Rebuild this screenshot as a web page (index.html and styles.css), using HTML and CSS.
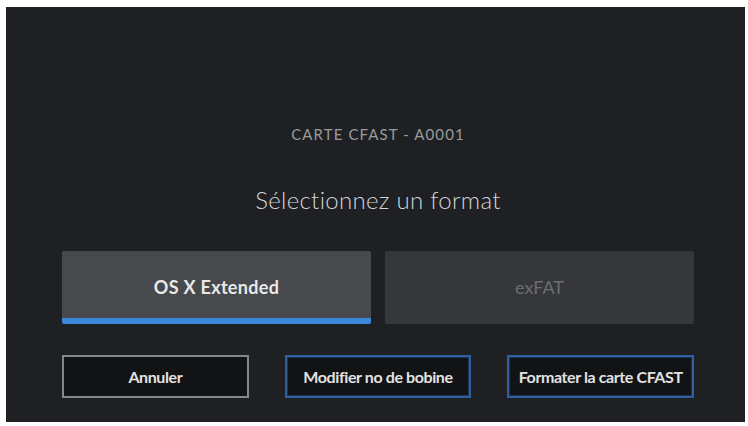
FILE: index.html
```html
<!DOCTYPE html>
<html lang="fr">
<head>
<meta charset="utf-8">
<title>Formater la carte CFAST</title>
<link rel="stylesheet" href="styles.css">
</head>
<body>
  <div class="panel">
    <div class="caption">CARTE CFAST - A0001</div>
    <div class="title">Sélectionnez un format</div>
    <div class="tabs">
      <div class="tab tab-active">OS X Extended</div>
      <div class="tab tab-inactive">exFAT</div>
    </div>
    <div class="actions">
      <div class="btn btn-grey">Annuler</div>
      <div class="btn btn-blue">Modifier no de bobine</div>
      <div class="btn btn-blue">Formater la carte CFAST</div>
    </div>
  </div>
</body>
</html>
```

FILE: styles.css
```css
html, body {
  margin: 0;
  padding: 0;
  background: #ffffff;
}

body {
  width: 748px;
  height: 426px;
  overflow: hidden;
  font-family: Lato, "Open Sans", sans-serif;
}

.panel {
  margin: 7px 0 0 6px;
  width: 739px;
  height: 415px;
  box-sizing: border-box;
  padding: 118px 51px 0 56px;
  background: #1e2023;
  display: flex;
  flex-direction: column;
}

.caption {
  height: 18px;
  line-height: 18px;
  font-size: 15px;
  color: #9a9b9d;
  text-align: center;
  letter-spacing: 1.1px;
}

.title {
  margin-top: 43px;
  height: 28px;
  line-height: 28px;
  font-size: 24px;
  font-weight: 300;
  color: #d4d5d6;
  text-align: center;
  letter-spacing: 0.3px;
}

.tabs {
  margin-top: 37px;
  display: grid;
  grid-template-columns: 1fr 1fr;
  gap: 14px;
  height: 73px;
}

.tab {
  display: flex;
  align-items: center;
  justify-content: center;
  box-sizing: border-box;
  border-radius: 2px;
}

.tab-active {
  background: #47494c;
  border-bottom: 6px solid #3b87dc;
  color: #e9e9ea;
  font-size: 18px;
  font-weight: 700;
  letter-spacing: 0.3px;
  padding-top: 4px;
}

.tab-inactive {
  background: #35373a;
  color: #6c6e71;
  font-size: 18px;
  padding-bottom: 2px;
}

.actions {
  margin-top: 31px;
  display: grid;
  grid-template-columns: repeat(3, 1fr);
  gap: 36px;
  height: 43px;
}

.btn {
  display: flex;
  align-items: center;
  justify-content: center;
  box-sizing: border-box;
  background: #121315;
  color: #e2e2e3;
  font-size: 16px;
  font-weight: 700;
  letter-spacing: -0.4px;
  white-space: nowrap;
}

.btn-grey {
  border: 2px solid #858687;
}

.btn-blue {
  border: 2px solid #2e5f9f;
  box-shadow: inset 0 0 0 1px #1d3558;
}
```
